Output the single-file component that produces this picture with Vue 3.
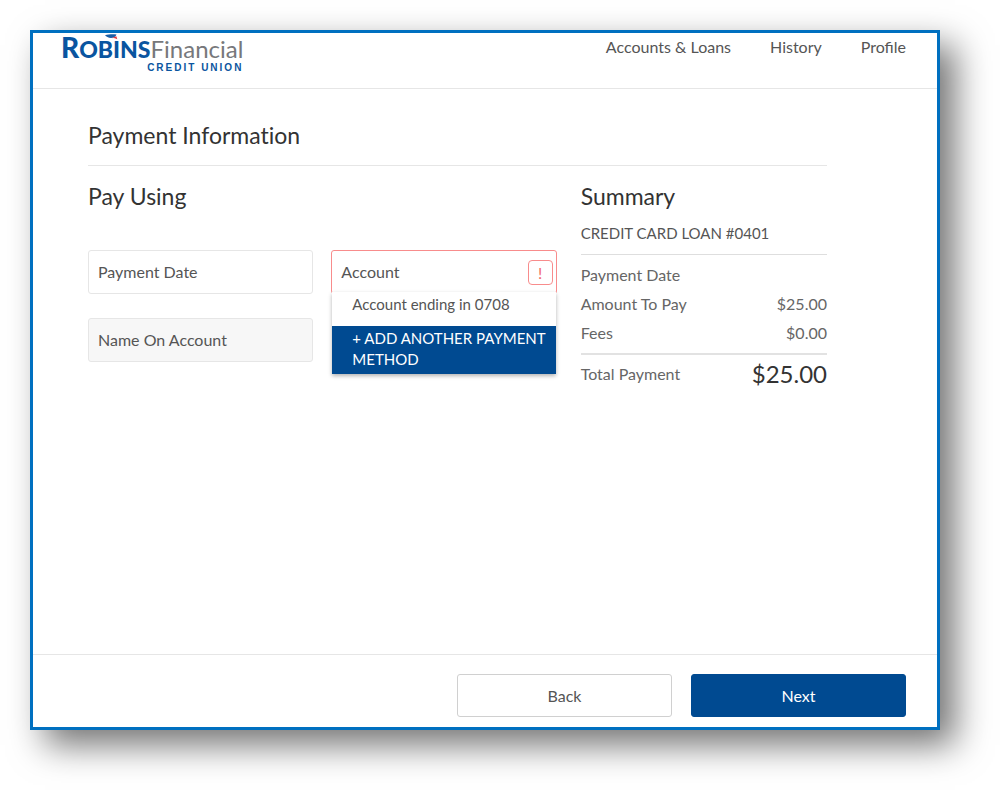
<script setup>
import { ref } from 'vue'

const navLinks = ['Accounts & Loans', 'History', 'Profile']
const summaryRows = [
  { label: 'Payment Date', value: '' },
  { label: 'Amount To Pay', value: '$25.00' },
  { label: 'Fees', value: '$0.00' },
]
const account = ref('')
</script>

<template>
  <div class="panel">
    <header class="header">
      <a class="logo" href="#" aria-label="Robins Financial Credit Union">
        <span class="logo-name">
          <span class="robins"><span class="robins-initial">R</span>OBINS</span>
          <span class="financial">Financial</span>
        </span>
        <span class="logo-sub">CREDIT UNION</span>
        <svg class="swoosh" width="14" height="6" viewBox="0 0 14 6" aria-hidden="true">
          <path d="M1 1.300C4 .3 8.500 0 12.500 .4 11.800 2.600 9.500 3.900 7 3.900 4.200 3.900 2.200 2.800 1 1.300Z" fill="#1b5fa6" />
          <path d="M8 4 12.300 2.200 13.300 5.200C11.800 4.400 10.300 4.200 8 4Z" fill="#e0343c" />
        </svg>
      </a>
      <nav class="nav">
        <a v-for="link in navLinks" :key="link" href="#">{{ link }}</a>
      </nav>
    </header>

    <main class="main">
      <h1 class="title">Payment Information</h1>
      <div class="columns">
        <section class="pay">
          <h2>Pay Using</h2>
          <form class="fields" @submit.prevent>
            <div class="field">
              <label for="payment-date">Payment Date</label>
              <input id="payment-date" type="text" />
            </div>
            <div class="field invalid">
              <label for="account">Account</label>
              <select id="account" v-model="account">
                <option value=""></option>
              </select>
              <span class="alert">!</span>
              <div class="menu">
                <button type="button" class="choice">Account ending in 0708</button>
                <button type="button" class="choice add">+ ADD ANOTHER PAYMENT METHOD</button>
              </div>
            </div>
            <div class="field disabled">
              <label for="holder">Name On Account</label>
              <input id="holder" type="text" disabled />
            </div>
          </form>
        </section>

        <section class="summary">
          <h2>Summary</h2>
          <p class="loan">CREDIT CARD LOAN #0401</p>
          <dl class="rows">
            <div v-for="row in summaryRows" :key="row.label" class="row">
              <dt>{{ row.label }}</dt>
              <dd>{{ row.value }}</dd>
            </div>
          </dl>
          <dl class="total">
            <div class="row">
              <dt>Total Payment</dt>
              <dd>$25.00</dd>
            </div>
          </dl>
        </section>
      </div>
    </main>

    <footer class="footer">
      <button type="button" class="btn">Back</button>
      <button type="button" class="btn primary">Next</button>
    </footer>
  </div>
</template>

<style>
body {
  background: #fff;
}
</style>

<style scoped>
* {
  box-sizing: border-box;
}
.panel {
  display: flex;
  flex-direction: column;
  min-height: calc(100vh - 90px);
  margin: 30px 60px 60px 30px;
  border: 3px solid #0070c0;
  background: #fff;
  box-shadow: 15px 15px 33px rgba(0, 0, 0, 0.55);
  color: #555;
  font-family: Lato, "Liberation Sans", sans-serif;
  font-size: 16px;
  line-height: 20px;
}
.header {
  display: flex;
  justify-content: space-between;
  align-items: flex-start;
  height: 56px;
  padding: 0 31px 0 28px;
  border-bottom: 1px solid #e6e6e6;
}
.logo {
  position: relative;
  display: flex;
  flex-direction: column;
  align-items: flex-end;
  color: #0a55a0;
  text-decoration: none;
}
.logo-name {
  display: flex;
  align-items: baseline;
  line-height: 28px;
}
.robins {
  font-size: 23px;
  font-weight: 900;
}
.robins-initial {
  font-size: 28px;
}
.financial {
  color: #77787b;
  font-size: 24px;
}
.logo-sub {
  font-family: "Liberation Sans", sans-serif;
  font-size: 10px;
  font-weight: 700;
  letter-spacing: 2px;
  line-height: 9px;
}
.swoosh {
  position: absolute;
  left: 43px;
  top: 1px;
}
.nav {
  display: flex;
  gap: 39px;
  padding-top: 4px;
}
.nav a {
  color: #555;
  text-decoration: none;
}
.main {
  flex: 1;
  padding: 31px 110px 32px 55px;
}
h1,
h2 {
  margin: 0;
  color: #333;
  font-size: 23px;
  font-weight: 400;
  font-variant-ligatures: none;
  line-height: 30px;
}
.title {
  padding-bottom: 15px;
  border-bottom: 1px solid #e6e6e6;
}
.columns {
  display: grid;
  grid-template-columns: 2fr 1fr;
  padding-top: 15px;
}
.pay {
  padding-right: 24px;
}
.fields {
  display: grid;
  grid-template-columns: 1fr 1fr;
  gap: 24px 18px;
  padding-top: 39px;
}
.field {
  position: relative;
  display: flex;
  align-items: center;
  gap: 8px;
  height: 44px;
  padding: 0 3px 0 9px;
  border: 1px solid #e6e6e6;
  border-radius: 3px;
}
.field label {
  white-space: nowrap;
}
.field input,
.field select {
  flex: 1;
  width: 0;
  min-width: 0;
  height: 40px;
  padding: 0;
  border: 0;
  outline: 0;
  background: transparent;
  color: inherit;
  font: inherit;
  appearance: none;
}
.field.invalid {
  border-color: #f88c8c;
}
.field.disabled {
  background: #f7f7f7;
}
.alert {
  width: 25px;
  height: 25px;
  border: 1px solid #f88c8c;
  border-radius: 4px;
  color: #f26a6a;
  line-height: 23px;
  text-align: center;
}
.menu {
  position: absolute;
  top: 41px;
  left: 0;
  right: 0;
  background: #fff;
  box-shadow: 0 2px 4px rgba(0, 0, 0, 0.3);
}
.choice {
  display: block;
  width: 100%;
  padding: 2px 8px 11px 20px;
  border: 0;
  background: #fff;
  color: #555;
  font: inherit;
  font-size: 15px;
  line-height: 21px;
  text-align: left;
}
.choice.add {
  padding: 2px 8px 4px 20px;
  background: #004a91;
  color: #fff;
}
.loan {
  margin: 0;
  padding: 12px 0 11px;
  border-bottom: 1px solid #dedede;
  font-size: 15px;
}
dl {
  margin: 0;
}
.rows {
  display: grid;
  gap: 9px;
  padding: 10px 0;
  border-bottom: 2px solid #e2e2e2;
}
.row {
  display: flex;
  justify-content: space-between;
  align-items: center;
  color: #666;
}
dd {
  margin: 0;
}
.total {
  padding-top: 4px;
}
.total dd {
  color: #333;
  font-size: 24px;
  line-height: 30px;
}
.footer {
  display: flex;
  justify-content: flex-end;
  gap: 19px;
  padding: 19px 31px 10px;
  border-top: 1px solid #e6e6e6;
}
.btn {
  width: 215px;
  height: 43px;
  border: 1px solid #d0d0d0;
  border-radius: 3px;
  background: #fff;
  color: #555;
  font: inherit;
}
.btn.primary {
  border-color: #004a91;
  background: #004a91;
  color: #fff;
}
</style>
